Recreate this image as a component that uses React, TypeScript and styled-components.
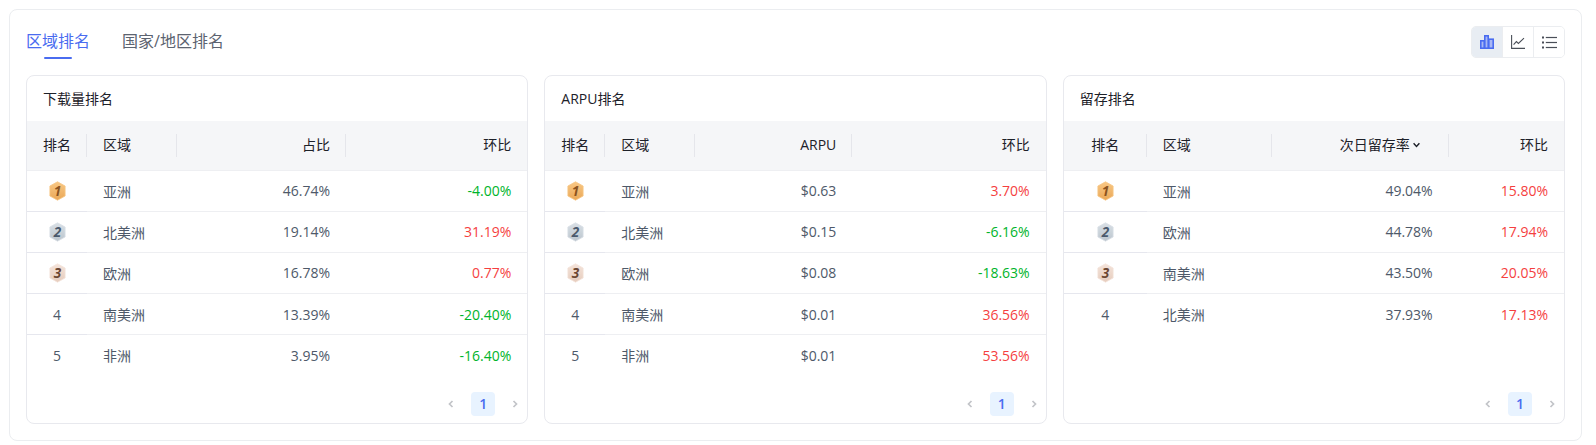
import React from "react";
import styled, { createGlobalStyle } from "styled-components";

const GlobalStyle = createGlobalStyle`
  body {
    margin: 0;
    background: #fff;
    font-family: "Open Sans", "Noto Sans CJK SC", sans-serif;
  }
`;

const Page = styled.div`
  padding: 9px 14px 4px 9px;
`;

const Panel = styled.div`
  display: flex;
  flex-direction: column;
  gap: 17px;
  height: 432px;
  box-sizing: border-box;
  padding: 16px;
  border: 1px solid #ebedf0;
  border-radius: 8px;
`;

const TopBar = styled.div`
  display: flex;
  justify-content: space-between;
  height: 32px;
`;

const Tabs = styled.div`
  display: flex;
  gap: 32px;
`;

const Tab = styled.div<{ $active?: boolean }>`
  position: relative;
  font-size: 16px;
  line-height: 30px;
  height: 32px;
  color: ${p => (p.$active ? "#4a6cf0" : "#5c6370")};

  &::after {
    content: "";
    display: ${p => (p.$active ? "block" : "none")};
    position: absolute;
    left: 50%;
    bottom: -1px;
    width: 28px;
    height: 2px;
    margin-left: -14px;
    background: #4a6cf0;
    border-radius: 1px;
  }
`;

const Toggle = styled.div`
  display: flex;
  border: 1px solid #ebedf0;
  border-radius: 5px;
  overflow: hidden;
`;

const ToggleButton = styled.div<{ $active?: boolean }>`
  display: flex;
  align-items: center;
  justify-content: center;
  width: 30px;
  background: ${p => (p.$active ? "#e8edf3" : "#fff")};
  color: ${p => (p.$active ? "#4a6cf0" : "#4a4f58")};

  & + & {
    border-left: 1px solid #ebedf0;
  }
`;

const Cards = styled.div`
  display: grid;
  grid-template-columns: repeat(3, 1fr);
  gap: 16px;
  flex: 1;
`;

const Card = styled.div`
  display: flex;
  flex-direction: column;
  border: 1px solid #e8e9ee;
  border-radius: 8px;
  overflow: hidden;
`;

const CardTitle = styled.div`
  height: 45px;
  line-height: 46px;
  padding-left: 16px;
  font-size: 14px;
  color: #1d2129;
`;

const Row = styled.div<{ $cols: string }>`
  display: grid;
  grid-template-columns: ${p => p.$cols};
`;

const HeadCell = styled.div<{ $align?: string; $last?: boolean }>`
  position: relative;
  height: 49.5px;
  line-height: 48.5px;
  padding: 0 16px;
  box-sizing: border-box;
  background: #f5f6f8;
  border-bottom: 1px solid #eeeff2;
  font-size: 14px;
  color: #1d2129;
  text-align: ${p => p.$align || "left"};
  white-space: nowrap;

  &::after {
    content: "";
    display: ${p => (p.$last ? "none" : "block")};
    position: absolute;
    right: 0;
    top: 13px;
    width: 1px;
    height: 23px;
    background: #e5e6eb;
  }
`;

const Cell = styled.div<{ $align?: string; $tone?: string; $first?: boolean; $end?: boolean }>`
  display: flex;
  align-items: center;
  justify-content: ${p => p.$align || "flex-start"};
  height: 41.2px;
  padding: 0 16px;
  box-sizing: border-box;
  border-bottom: 1px solid ${p => (p.$end ? "transparent" : p.$first ? "#e6e7ee" : "#eeeff2")};
  font-size: 14px;
  color: ${p => p.$tone || "#4e5969"};
`;

const Pager = styled.div`
  display: flex;
  align-items: center;
  justify-content: flex-end;
  gap: 8px;
  margin-top: auto;
  padding-bottom: 7px;
`;

const PageArrow = styled.div`
  display: flex;
  align-items: center;
  justify-content: center;
  width: 24px;
  height: 24px;
  color: #c2c4c8;
`;

const PageNum = styled.div`
  width: 24px;
  height: 24px;
  line-height: 24px;
  border-radius: 4px;
  background: #e8f3ff;
  color: #4a6cf0;
  font-size: 14px;
  font-weight: 600;
  text-align: center;
`;

const SortMark = styled.svg`
  margin: 0 13px 0 3px;
  vertical-align: 2px;
`;

const medalTones: Record<number, [string, string, string]> = {
  1: ["#f8c784", "#eaa858", "#8a5320"],
  2: ["#d9e0e6", "#bcc6ce", "#4a5a6c"],
  3: ["#f4e3da", "#e6cdbe", "#6a4632"],
};

const Medal = ({ rank }: { rank: number }) => {
  const [a, b, ink] = medalTones[rank];
  return (
    <svg width="17" height="20" viewBox="1 0 16 20">
      <defs>
        <linearGradient id={`medal${rank}`} x1="0" y1="0" x2="0" y2="1">
          <stop offset="0" stopColor={a} />
          <stop offset="1" stopColor={b} />
        </linearGradient>
      </defs>
      <path
        d="M9 .8 16.6 5v10L9 19.2 1.4 15V5Z"
        fill={`url(#medal${rank})`}
        stroke={a}
        strokeWidth="0.8"
        strokeLinejoin="round"
      />
      <text
        x="9"
        y="14.8"
        textAnchor="middle"
        fontSize="13.5"
        fontWeight="700"
        fontStyle="italic"
        fontFamily="Open Sans, sans-serif"
        fill={ink}
      >
        {rank}
      </text>
    </svg>
  );
};

const Chevron = ({ dir }: { dir: "left" | "right" }) => (
  <svg width="8" height="10" viewBox="0 0 8 10" fill="none" stroke="currentColor" strokeWidth="1.7">
    <path d={dir === "left" ? "M5.5 2 2.5 5l3 3" : "M2.5 2 5.5 5l-3 3"} />
  </svg>
);

const BarsIcon = () => (
  <svg width="14" height="14" viewBox="0 0 14 14" fill="none" stroke="currentColor" strokeWidth="1.6">
    <rect x="0.8" y="5.8" width="3.4" height="7.4" fill="#a9b8f5" />
    <rect x="4.8" y="0.8" width="3.4" height="12.4" fill="#a9b8f5" />
    <rect x="8.8" y="4.2" width="4.4" height="9" fill="#a9b8f5" />
  </svg>
);

const LineIcon = () => (
  <svg width="14" height="14" viewBox="0 0 14 14" fill="none" stroke="currentColor" strokeWidth="1.1">
    <path d="M.6 0v13.4H14" />
    <path d="M2.6 9.6 5.4 6.6l2 1.8L13 3.2" />
  </svg>
);

const ListIcon = () => (
  <svg width="15" height="13" viewBox="0 0 15 13" fill="currentColor">
    <rect x="0" y="0.5" width="2" height="2" />
    <rect x="0" y="5.5" width="2" height="2" />
    <rect x="0" y="10.5" width="2" height="2" />
    <rect x="3.8" y="0.9" width="11.2" height="1.2" />
    <rect x="3.8" y="5.9" width="11.2" height="1.2" />
    <rect x="3.8" y="10.9" width="11.2" height="1.2" />
  </svg>
);

const GREEN = "#00b42a";
const RED = "#f53f3f";

type Item = { area: string; value: string; change: string };

const cards: { title: string; metric: string; sorted?: boolean; cols: string; items: Item[] }[] = [
  {
    title: "下载量排名",
    metric: "占比",
    cols: "60px 90px 169px 1fr",
    items: [
      { area: "亚洲", value: "46.74%", change: "-4.00%" },
      { area: "北美洲", value: "19.14%", change: "31.19%" },
      { area: "欧洲", value: "16.78%", change: "0.77%" },
      { area: "南美洲", value: "13.39%", change: "-20.40%" },
      { area: "非洲", value: "3.95%", change: "-16.40%" },
    ],
  },
  {
    title: "ARPU排名",
    metric: "ARPU",
    cols: "60px 90px 157px 1fr",
    items: [
      { area: "亚洲", value: "$0.63", change: "3.70%" },
      { area: "北美洲", value: "$0.15", change: "-6.16%" },
      { area: "欧洲", value: "$0.08", change: "-18.63%" },
      { area: "南美洲", value: "$0.01", change: "36.56%" },
      { area: "非洲", value: "$0.01", change: "53.56%" },
    ],
  },
  {
    title: "留存排名",
    metric: "次日留存率",
    sorted: true,
    cols: "83px 125px 177px 1fr",
    items: [
      { area: "亚洲", value: "49.04%", change: "15.80%" },
      { area: "欧洲", value: "44.78%", change: "17.94%" },
      { area: "南美洲", value: "43.50%", change: "20.05%" },
      { area: "北美洲", value: "37.93%", change: "17.13%" },
    ],
  },
];

const App: React.FC = () => (
  <Page>
    <GlobalStyle />
    <Panel>
      <TopBar>
        <Tabs>
          <Tab $active>区域排名</Tab>
          <Tab>国家/地区排名</Tab>
        </Tabs>
        <Toggle>
          <ToggleButton $active>
            <BarsIcon />
          </ToggleButton>
          <ToggleButton>
            <LineIcon />
          </ToggleButton>
          <ToggleButton>
            <ListIcon />
          </ToggleButton>
        </Toggle>
      </TopBar>
      <Cards>
        {cards.map(card => (
          <Card key={card.title}>
            <CardTitle>{card.title}</CardTitle>
            <Row $cols={card.cols}>
              <HeadCell $align="center">排名</HeadCell>
              <HeadCell>区域</HeadCell>
              <HeadCell $align="right">
                {card.metric}
                {card.sorted && (
                  <SortMark width="7" height="6" viewBox="0 0 7 6" fill="none" stroke="#1d2129" strokeWidth="1.4">
                    <path d="M.6 1.2 3.5 4.4l2.9-3.2" />
                  </SortMark>
                )}
              </HeadCell>
              <HeadCell $align="right" $last>
                环比
              </HeadCell>
            </Row>
            {card.items.map((item, i) => {
              const end = i === card.items.length - 1;
              return (
                <Row $cols={card.cols} key={item.area}>
                  <Cell $align="center" $first $end={end}>
                    {i < 3 ? <Medal rank={i + 1} /> : i + 1}
                  </Cell>
                  <Cell $end={end}>{item.area}</Cell>
                  <Cell $align="flex-end" $end={end}>
                    {item.value}
                  </Cell>
                  <Cell $align="flex-end" $end={end} $tone={item.change.startsWith("-") ? GREEN : RED}>
                    {item.change}
                  </Cell>
                </Row>
              );
            })}
            <Pager>
              <PageArrow>
                <Chevron dir="left" />
              </PageArrow>
              <PageNum>1</PageNum>
              <PageArrow>
                <Chevron dir="right" />
              </PageArrow>
            </Pager>
          </Card>
        ))}
      </Cards>
    </Panel>
  </Page>
);

export default App;
